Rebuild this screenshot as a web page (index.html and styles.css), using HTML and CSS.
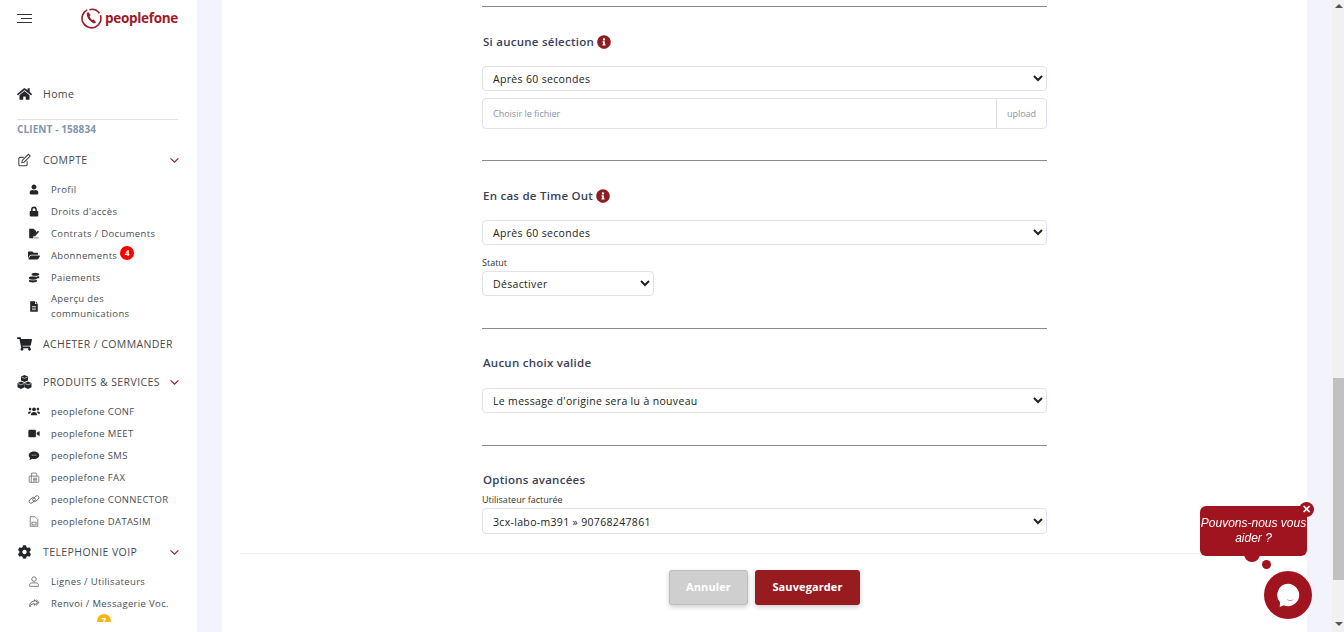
FILE: index.html
```html
<!DOCTYPE html>
<html lang="fr">
<head>
    <meta charset="UTF-8">
    <meta name="viewport" content="width=device-width, initial-scale=1.0">
    <title>peoplefone</title>
    <link rel="stylesheet" href="styles.css">
</head>
<body>
    <svg class="sprites" width="0" height="0">
        <symbol id="i-home" viewBox="0 0 576 512"><path d="M280.37 148.26L96 300.11V464a16 16 0 0 0 16 16l112.06-.29a16 16 0 0 0 15.92-16V368a16 16 0 0 1 16-16h64a16 16 0 0 1 16 16v95.64a16 16 0 0 0 16 16.05L464 480a16 16 0 0 0 16-16V300L295.67 148.26a12.19 12.19 0 0 0-15.3 0zM571.6 251.47L488 182.56V44.05a12 12 0 0 0-12-12h-56a12 12 0 0 0-12 12v72.61L318.47 43a48 48 0 0 0-61 0L4.34 251.47a12 12 0 0 0-1.6 16.9l25.5 31A12 12 0 0 0 45.15 301l235.22-193.74a12.19 12.19 0 0 1 15.3 0L530.9 301a12 12 0 0 0 16.9-1.6l25.5-31a12 12 0 0 0-1.7-16.93z"/></symbol>
        <symbol id="i-user" viewBox="0 -32 448 576"><path d="M224 256c70.7 0 128-57.3 128-128S294.7 0 224 0 96 57.3 96 128s57.3 128 128 128zm89.6 32h-16.7c-22.2 10.2-46.9 16-72.9 16s-50.6-5.8-72.9-16h-16.7C60.2 288 0 348.2 0 422.4V464c0 26.5 21.5 48 48 48h352c26.5 0 48-21.5 48-48v-41.6c0-74.2-60.2-134.4-134.4-134.4z"/></symbol>
        <symbol id="i-lock" viewBox="0 -32 448 576"><path d="M400 224h-24v-72C376 68.2 307.8 0 224 0S72 68.2 72 152v72H48c-26.5 0-48 21.5-48 48v192c0 26.5 21.5 48 48 48h352c26.5 0 48-21.5 48-48V272c0-26.5-21.5-48-48-48zm-104 0H152v-72c0-39.7 32.3-72 72-72s72 32.3 72 72v72z"/></symbol>
        <symbol id="i-folder" viewBox="0 0 576 512"><path d="M572.694 292.093L500.27 416.248A63.997 63.997 0 0 1 444.989 448H45.025c-18.523 0-30.064-20.093-20.731-36.093l72.424-124.155A64 64 0 0 1 152 256h399.964c18.523 0 30.064 20.093 20.73 36.093zM152 224h328v-48c0-26.51-21.49-48-48-48H272l-64-64H48C21.49 64 0 85.49 0 112v278.046l69.077-118.418C86.214 242.25 117.989 224 152 224z"/></symbol>
        <symbol id="i-cart" viewBox="0 0 576 512"><path d="M528.12 301.319l47.273-208C578.806 78.301 567.391 64 551.99 64H159.208l-9.166-44.81C147.758 8.021 137.93 0 126.529 0H24C10.745 0 0 10.745 0 24v16c0 13.255 10.745 24 24 24h69.883l70.248 343.435C147.325 417.1 136 435.222 136 456c0 30.928 25.072 56 56 56s56-25.072 56-56c0-15.674-6.447-29.835-16.824-40h209.647C430.447 426.165 424 440.326 424 456c0 30.928 25.072 56 56 56s56-25.072 56-56c0-22.172-12.888-41.332-31.579-50.405l5.517-24.276c3.413-15.018-8.002-29.319-23.403-29.319H218.117l-6.545-32h293.145c11.206 0 20.92-7.754 23.403-18.681z"/></symbol>
        <symbol id="i-cog" viewBox="0 0 512 512"><path d="M487.4 315.7l-42.6-24.6c4.3-23.2 4.3-47 0-70.2l42.6-24.6c4.9-2.8 7.1-8.6 5.5-14-11.1-35.6-30-67.8-54.7-94.6-3.8-4.1-10-5.1-14.8-2.3L380.8 110c-17.9-15.4-38.5-27.3-60.8-35.1V25.8c0-5.6-3.9-10.5-9.4-11.7-36.7-8.2-74.3-7.8-109.2 0-5.5 1.2-9.4 6.1-9.4 11.7V75c-22.2 7.9-42.8 19.8-60.8 35.1L88.7 85.5c-4.9-2.8-11-1.9-14.8 2.3-24.7 26.7-43.6 58.9-54.7 94.6-1.7 5.4.6 11.2 5.5 14L67.3 221c-4.3 23.2-4.3 47 0 70.2l-42.6 24.6c-4.9 2.8-7.1 8.6-5.5 14 11.1 35.6 30 67.8 54.7 94.6 3.8 4.1 10 5.1 14.8 2.3l42.6-24.6c17.9 15.4 38.5 27.3 60.8 35.1v49.2c0 5.6 3.9 10.5 9.4 11.7 36.7 8.2 74.3 7.8 109.2 0 5.5-1.2 9.4-6.1 9.4-11.7v-49.2c22.2-7.9 42.8-19.8 60.8-35.1l42.6 24.6c4.9 2.8 11 1.9 14.8-2.3 24.7-26.7 43.6-58.9 54.7-94.6 1.5-5.5-.7-11.3-5.6-14.1zM256 336c-44.1 0-80-35.9-80-80s35.9-80 80-80 80 35.9 80 80-35.9 80-80 80z"/></symbol>
        <symbol id="i-info" viewBox="0 0 512 512"><path d="M256 8C119.043 8 8 119.083 8 256c0 136.997 111.043 248 248 248s248-111.003 248-248C504 119.083 392.957 8 256 8zm0 110c23.196 0 42 18.804 42 42s-18.804 42-42 42-42-18.804-42-42 18.804-42 42-42zm56 254c0 6.627-5.373 12-12 12h-88c-6.627 0-12-5.373-12-12v-24c0-6.627 5.373-12 12-12h12v-64h-12c-6.627 0-12-5.373-12-12v-24c0-6.627 5.373-12 12-12h64c6.627 0 12 5.373 12 12v100h12c6.627 0 12 5.373 12 12v24z"/></symbol>
        <symbol id="i-edit" viewBox="0 0 16 16"><path d="M11 9.500V13a1.500 1.500 0 0 1-1.500 1.500h-6.500A1.500 1.500 0 0 1 1.500 13V6.500A1.500 1.500 0 0 1 3 5h4" fill="none" stroke="currentColor" stroke-width="1.200"/><path d="M5.500 8.500l7-7 2 2-7 7-2.500.5z" fill="none" stroke="currentColor" stroke-width="1.200"/></symbol>
        <symbol id="i-contract" viewBox="0 0 16 16"><path d="M1 1h6.500L11 4.500V7L7 11.500V15H1z"/><path d="M7 10.500l6.500-6.500 2 1.500-6 6.500H7z"/><path d="M8 14.500h7" fill="none" stroke="currentColor" stroke-width="1"/></symbol>
        <symbol id="i-coins" viewBox="0 0 16 16"><ellipse cx="6.500" cy="12.800" rx="6" ry="2.400"/><ellipse cx="6.500" cy="8.600" rx="6" ry="2.400"/><ellipse cx="10" cy="3.500" rx="5.500" ry="2.500"/><path d="M12 6.200h3.500v3H12z"/><path d="M.8 10.800c2.500 1.300 8.500 1.300 11.400 0M5 5.500c2 .7 7 .8 10.500-.6" fill="none" stroke="#fff" stroke-width=".7"/></symbol>
        <symbol id="i-file" viewBox="0 0 16 16"><path d="M2.500 0.500h7v4h4v11h-11z"/><path d="M10.500 0.500l3 3h-3z"/><path d="M5 8h6M5 10.300h6M5 12.600h6" stroke="#fff" stroke-width="1"/></symbol>
        <symbol id="i-cubes" viewBox="0 0 16 16"><path d="M8 0l4 1.700v4.700L8 8 4 6.400V1.700z"/><path d="M4 7.500l4 1.700v4.700L4 16 0 13.900V9.200z"/><path d="M12 7.500l4 1.700v4.700L12 16l-4-2.100V9.200z"/><path d="M4.500 2.300L8 3.800l3.500-1.500M.6 9.800L4 11.300l3.400-1.500M8.600 9.800l3.400 1.500 3.400-1.500" fill="none" stroke="#fff" stroke-width=".7"/></symbol>
        <symbol id="i-users" viewBox="0 1.500 16 13"><circle cx="8" cy="5" r="2.500"/><circle cx="2.800" cy="4.800" r="1.700"/><circle cx="13.200" cy="4.800" r="1.700"/><path d="M3.800 13c0-3 1.800-4.500 4.200-4.500s4.200 1.500 4.200 4.500z"/><path d="M0 11c0-2 .8-3 2.500-3 .7 0 1.200.2 1.700.6-.8.600-1.300 1.400-1.500 2.400zM16 11c0-2-.8-3-2.500-3-.7 0-1.200.2-1.700.6.8.600 1.300 1.400 1.500 2.400z"/></symbol>
        <symbol id="i-video" viewBox="0 1.500 16 13"><rect x="0.500" y="3" width="10" height="10" rx="1.500"/><path d="M11.500 7l4-2.500v7l-4-2.500z"/></symbol>
        <symbol id="i-sms" viewBox="0 1.500 16 13"><path d="M8 2.500c4 0 7 2.200 7 5s-3 5-7 5c-.9 0-1.700-.1-2.500-.3C4.500 13 3 13.800 1.500 14c.7-.8 1.200-1.700 1.400-2.800C1.700 10.300 1 9 1 7.500c0-2.800 3-5 7-5z"/><path d="M5 7.500h6" stroke="#fff" stroke-width="1.200" stroke-dasharray="1.200 1.200"/></symbol>
        <symbol id="i-fax" viewBox="0 0 16 16"><g fill="none" stroke="currentColor" stroke-width="1"><rect x="1" y="6" width="14" height="9" rx="1"/><path d="M4.500 6V1.500h6.500L12 3v3M4 6v9"/><path d="M6.500 9h6M6.500 11h6M6.500 13h6"/></g></symbol>
        <symbol id="i-link" viewBox="0 0 16 16"><g fill="none" stroke="currentColor" stroke-width="1.200"><rect x="0.300" y="6.500" width="10" height="5.500" rx="2.750" transform="rotate(-40 5.300 9.250)"/><rect x="5.700" y="4" width="10" height="5.500" rx="2.750" transform="rotate(-40 10.700 6.750)"/></g></symbol>
        <symbol id="i-sim" viewBox="0 0 16 16"><g fill="none" stroke="currentColor" stroke-width="1"><path d="M2.500 1h7l4 4v10h-11z"/><rect x="5" y="9" width="6" height="4"/></g></symbol>
        <symbol id="i-user-line" viewBox="0 0 16 16"><g fill="none" stroke="currentColor" stroke-width="1.100"><circle cx="8" cy="4.500" r="3.300"/><path d="M1.500 15v-1.500c0-2 1.500-3.500 3.500-3.500h6c2 0 3.500 1.500 3.500 3.500V15z"/></g></symbol>
        <symbol id="i-share" viewBox="0 0 16 16"><g fill="none" stroke="currentColor" stroke-width="1.300"><path d="M8.500 2.500L13 6.500l-4.500 4V8.300C5.500 8.300 3.500 9.500 2 13 1 8 3.800 4.800 8.500 4.700z"/><path d="M11 2.500l4.300 4-4.300 4"/></g></symbol>
        <symbol id="i-list" viewBox="0 0 16 16"><path d="M1 3h3v3H1zM6 3h9v3H6z"/></symbol>
        <symbol id="i-chevron" viewBox="0 0 12 8"><path d="M1.500 1.500L6 6l4.500-4.500" fill="none" stroke="currentColor" stroke-width="1.300"/></symbol>
    </svg>

    <div class="layout">
        <!-- Sidebar -->
        <aside class="sidebar">
            <div class="sidebar-inner">
                <div class="brand">
                    <span class="burger"><i></i><i></i><i></i></span>
                    <span class="logo">
                        <svg class="logo-mark" viewBox="0 0 20 20" width="21" height="21">
                            <path d="M6 1.800A9 9 0 1 0 18.500 7" fill="none" stroke="#9d1a26" stroke-width="1.500"/>
                            <path d="M8 1.600A9 9 0 0 1 17.500 5" fill="none" stroke="#9d1a26" stroke-width="1.500"/>
                            <path d="M6.800 3.800c-1 .6-1.500 1.400-1.300 2.600.5 3.100 3.100 6.500 6 7.800 1.100.5 2.100.2 2.900-.6l-2.400-2.700-1.300.6C9.500 10.600 8.500 9 8.100 7.700l1.200-.9z" fill="#9d1a26"/>
                        </svg>
                        peoplefone
                    </span>
                </div>

                <a class="nav-main nav-home"><svg class="icon-main"><use href="#i-home"/></svg>Home</a>
                <div class="nav-divider"></div>
                <div class="client">CLIENT - 158834</div>

                <a class="nav-main nav-compte"><svg class="icon-main"><use href="#i-edit"/></svg>COMPTE<svg class="chevron"><use href="#i-chevron"/></svg></a>
                <ul class="nav-sub">
                    <li><svg class="icon-sub"><use href="#i-user"/></svg>Profil</li>
                    <li><svg class="icon-sub"><use href="#i-lock"/></svg>Droits d'accès</li>
                    <li><svg class="icon-sub"><use href="#i-contract"/></svg>Contrats / Documents</li>
                    <li><svg class="icon-sub"><use href="#i-folder"/></svg><span class="with-badge">Abonnements<b class="badge badge-red">4</b></span></li>
                    <li><svg class="icon-sub"><use href="#i-coins"/></svg>Paiements</li>
                    <li class="two-lines"><svg class="icon-sub"><use href="#i-file"/></svg><span>Aperçu des<br>communications</span></li>
                </ul>

                <a class="nav-main nav-acheter"><svg class="icon-main"><use href="#i-cart"/></svg>ACHETER / COMMANDER</a>

                <a class="nav-main nav-produits"><svg class="icon-main"><use href="#i-cubes"/></svg>PRODUITS &amp; SERVICES<svg class="chevron"><use href="#i-chevron"/></svg></a>
                <ul class="nav-sub">
                    <li><svg class="icon-sub"><use href="#i-users"/></svg>peoplefone CONF</li>
                    <li><svg class="icon-sub"><use href="#i-video"/></svg>peoplefone MEET</li>
                    <li><svg class="icon-sub"><use href="#i-sms"/></svg>peoplefone SMS</li>
                    <li><svg class="icon-sub"><use href="#i-fax"/></svg>peoplefone FAX</li>
                    <li><svg class="icon-sub"><use href="#i-link"/></svg>peoplefone CONNECTOR</li>
                    <li><svg class="icon-sub"><use href="#i-sim"/></svg>peoplefone DATASIM</li>
                </ul>

                <a class="nav-main nav-voip"><svg class="icon-main"><use href="#i-cog"/></svg>TELEPHONIE VOIP<svg class="chevron"><use href="#i-chevron"/></svg></a>
                <ul class="nav-sub">
                    <li><svg class="icon-sub"><use href="#i-user-line"/></svg>Lignes / Utilisateurs</li>
                    <li><svg class="icon-sub"><use href="#i-share"/></svg>Renvoi / Messagerie Voc.</li>
                    <li><svg class="icon-sub"><use href="#i-list"/></svg><span class="with-badge">Numéros<b class="badge badge-yellow">7</b></span></li>
                </ul>
            </div>
        </aside>

        <!-- Main content -->
        <main class="content">
            <div class="card">
                <form class="form-col">
                    <section class="section section-first">
                        <h3 class="section-title">Si aucune sélection <svg class="icon-info"><use href="#i-info"/></svg></h3>
                        <select class="field"><option>Après 60 secondes</option></select>
                        <div class="upload">
                            <span class="upload-name">Choisir le fichier</span>
                            <span class="upload-btn">upload</span>
                        </div>
                    </section>

                    <section class="section">
                        <h3 class="section-title">En cas de Time Out <svg class="icon-info"><use href="#i-info"/></svg></h3>
                        <select class="field"><option>Après 60 secondes</option></select>
                        <label class="field-label label-statut">Statut</label>
                        <select class="field field-small"><option>Désactiver</option></select>
                    </section>

                    <section class="section section-choice">
                        <h3 class="section-title">Aucun choix valide</h3>
                        <select class="field"><option>Le message d'origine sera lu à nouveau</option></select>
                    </section>

                    <section class="section section-options">
                        <h3 class="section-title">Options avancées</h3>
                        <label class="field-label">Utilisateur facturée</label>
                        <select class="field field-tall"><option>3cx-labo-m391 » 90768247861</option></select>
                    </section>
                </form>

                <div class="actions">
                    <button type="button" class="btn btn-cancel">Annuler</button>
                    <button type="button" class="btn btn-save">Sauvegarder</button>
                </div>
            </div>
        </main>

        <!-- Scrollbar -->
        <div class="scrollbar">
            <span class="arrow arrow-up"></span>
            <span class="thumb"></span>
            <span class="arrow arrow-down"></span>
        </div>
    </div>

    <!-- Chat widget -->
    <div class="chat-bubble">
        Pouvons-nous vous aider ?
        <span class="chat-close">✕</span>
        <span class="chat-dot-big"></span>
        <span class="chat-dot-small"></span>
    </div>
    <div class="chat-launcher">
        <svg viewBox="0 0 28 28" width="26" height="26">
            <path d="M14 2a12 12 0 1 1-4.500 23.100L5 27l.5-5A12 12 0 0 1 14 2z" fill="#fff"/>
            <path d="M13 18.500c2 1.300 5 1.300 7 0-.5 2-6.500 2-7 0z" fill="#9f141e"/>
        </svg>
    </div>
</body>
</html>
```

FILE: styles.css
```css
/* General page styles */
* {
    box-sizing: border-box;
}

body {
    margin: 0;
    height: 632px;
    overflow: hidden;
    font-family: "Open Sans", Arial, sans-serif;
    background-color: #f3f4fb;
    color: #3b3f46;
}

.sprites {
    position: absolute;
}

.layout {
    display: flex;
    height: 632px;
}

/* Sidebar */
.sidebar {
    width: 197px;
    flex-shrink: 0;
    background: #fff;
}

.sidebar-inner {
    height: 622px;
    overflow: hidden;
    padding: 0 19px 0 17px;
}

.brand {
    display: flex;
    justify-content: space-between;
    align-items: center;
    height: 36px;
    margin-bottom: 48px;
}

.burger {
    display: flex;
    flex-direction: column;
    align-items: flex-end;
    gap: 3px;
    width: 15px;
}

.burger i {
    display: block;
    height: 1px;
    width: 15px;
    background: #333;
}

.burger i:nth-child(2) {
    width: 11px;
}

.logo {
    display: flex;
    align-items: center;
    gap: 3px;
    color: #9d1a26;
    font-weight: 700;
    font-size: 13.5px;
    letter-spacing: -0.3px;
}

.nav-main {
    display: flex;
    align-items: center;
    height: 20px;
    font-size: 10.5px;
    letter-spacing: 0.4px;
    color: #45494f;
}

.icon-main {
    width: 15px;
    height: 14px;
    margin-right: 11px;
    fill: #22252a;
    color: #444;
    flex-shrink: 0;
}

.chevron {
    width: 11px;
    height: 7px;
    margin-left: auto;
    margin-right: -2px;
    color: #9d1a26;
}

.nav-divider {
    height: 1px;
    margin-top: 15px;
    background: #e2e2e2;
}

.client {
    height: 18px;
    line-height: 18px;
    font-size: 10px;
    font-weight: 700;
    letter-spacing: 0.1px;
    color: #8295ad;
}

.nav-compte {
    margin-top: 12px;
}

.nav-acheter {
    margin-top: 13px;
}

.nav-produits {
    margin-top: 18px;
}

.nav-voip {
    margin-top: 10px;
}

.nav-sub {
    list-style: none;
    margin: 8px 0 0;
    padding: 0;
}

.nav-sub li {
    display: flex;
    align-items: center;
    height: 22px;
    padding-left: 11px;
    font-size: 9.5px;
    letter-spacing: 0.35px;
    color: #4a4e55;
}

.nav-sub li.two-lines {
    height: 30px;
    margin-top: 3px;
    line-height: 15px;
}

.icon-sub {
    width: 12px;
    height: 11px;
    margin-right: 11px;
    fill: #22252a;
    color: #555;
    flex-shrink: 0;
}

.with-badge {
    position: relative;
}

.badge {
    position: absolute;
    top: -3px;
    right: -17px;
    width: 14px;
    height: 14px;
    border-radius: 50%;
    font-size: 8px;
    letter-spacing: 0;
    line-height: 14px;
    text-align: center;
}

.badge-red {
    background: #f00;
    color: #fff;
}

.badge-yellow {
    top: -5px;
    right: -16px;
    background: #f5b618;
    color: #fff;
}

/* Main content */
.content {
    flex: 1;
    padding: 0 25px;
    overflow: hidden;
}

.card {
    height: 632px;
    background: #fff;
    padding: 6px 18px 0;
}

.form-col {
    width: 565px;
    margin: 0 auto;
}

.section {
    border-top: 1px solid #8a8a8a;
    padding-top: 25px;
    padding-bottom: 32px;
}

.section-first {
    padding-bottom: 31px;
}

.section-choice {
    padding-top: 24px;
}

.section-options {
    padding-top: 24px;
    padding-bottom: 0;
}

.section-title {
    display: flex;
    align-items: center;
    gap: 3px;
    height: 20px;
    margin: 0 0 14px;
    padding-bottom: 2px;
    padding-left: 1px;
    font-size: 11.5px;
    font-weight: 600;
    letter-spacing: 0.25px;
    color: #3a3e58;
}

.section-choice .section-title {
    margin-bottom: 15px;
}

.section-options .section-title {
    margin-bottom: 4px;
}

.icon-info {
    width: 14px;
    height: 14px;
    margin-top: 2px;
    fill: #8d1c24;
}

.field {
    display: block;
    width: 100%;
    height: 25px;
    padding: 0 6px;
    border: 1px solid #e0e1ea;
    border-radius: 4px;
    background: #fff;
    font-family: inherit;
    font-size: 10.5px;
    letter-spacing: 0.33px;
    color: #222;
}

.field-small {
    width: 172px;
}

.field-tall {
    height: 26px;
    padding-top: 1px;
}

.field-label {
    display: block;
    height: 12px;
    margin-bottom: 2px;
    font-size: 9px;
    line-height: 12px;
    color: #333;
}

.label-statut {
    margin-top: 12px;
}

.upload {
    display: flex;
    align-items: center;
    height: 31px;
    margin-top: 7px;
    border: 1px solid #e0e1ea;
    border-radius: 4px;
    font-size: 9px;
    color: #8795a8;
}

.upload-name {
    flex: 1;
    padding-left: 10px;
}

.upload-btn {
    width: 50px;
    height: 100%;
    line-height: 30px;
    text-align: center;
    border-left: 1px solid #e0e1ea;
}

/* Footer buttons */
.actions {
    display: flex;
    justify-content: center;
    gap: 7px;
    margin-top: 19px;
    padding-top: 16px;
    border-top: 1px solid #efefef;
}

.btn {
    height: 35px;
    padding: 0 0 2px;
    border-radius: 3px;
    font-family: inherit;
    font-size: 11px;
    font-weight: 700;
    letter-spacing: 0.1px;
    color: #fff;
    box-shadow: 0 2px 5px rgba(0, 0, 0, 0.2);
    cursor: pointer;
}

.btn-cancel {
    width: 79px;
    background: #cfcfcf;
    border: 1px solid #bdbdbd;
}

.btn-save {
    width: 105px;
    background: #981b20;
    border: none;
}

/* Fake browser scrollbar */
.scrollbar {
    display: flex;
    flex-direction: column;
    align-items: flex-end;
    width: 12px;
    flex-shrink: 0;
    background: #f1f1f1;
}

.arrow {
    width: 0;
    height: 0;
    margin: 4px 1px 0;
    border-left: 4px solid transparent;
    border-right: 4px solid transparent;
}

.arrow-up {
    border-bottom: 4px solid #555;
}

.arrow-down {
    margin-top: 42px;
    border-top: 4px solid #555;
}

.thumb {
    width: 11px;
    height: 202px;
    margin-top: 370px;
    background: #c1c1c1;
}

/* Chat widget */
.chat-bubble {
    position: fixed;
    left: 1200px;
    top: 506px;
    width: 107px;
    height: 50px;
    padding-top: 10px;
    border-radius: 6px;
    background: #9f141e;
    color: #fff;
    font-family: "Liberation Sans", Arial, sans-serif;
    font-size: 12px;
    font-style: italic;
    line-height: 15px;
    text-align: center;
}

.chat-close {
    position: absolute;
    right: -7px;
    top: -4px;
    width: 15px;
    height: 15px;
    border-radius: 50%;
    background: #9f141e;
    font-size: 11px;
    font-style: normal;
    font-weight: 700;
    line-height: 15px;
}

.chat-dot-big {
    position: absolute;
    left: 44px;
    top: 40px;
    width: 16px;
    height: 16px;
    border-radius: 50%;
    background: #9f141e;
    z-index: -1;
}

.chat-dot-small {
    position: absolute;
    left: 62px;
    top: 54px;
    width: 9px;
    height: 9px;
    border-radius: 50%;
    background: #9f141e;
}

.chat-launcher {
    position: fixed;
    left: 1264px;
    top: 571px;
    display: flex;
    align-items: center;
    justify-content: center;
    width: 48px;
    height: 48px;
    border-radius: 50%;
    background: #9f141e;
}
```
